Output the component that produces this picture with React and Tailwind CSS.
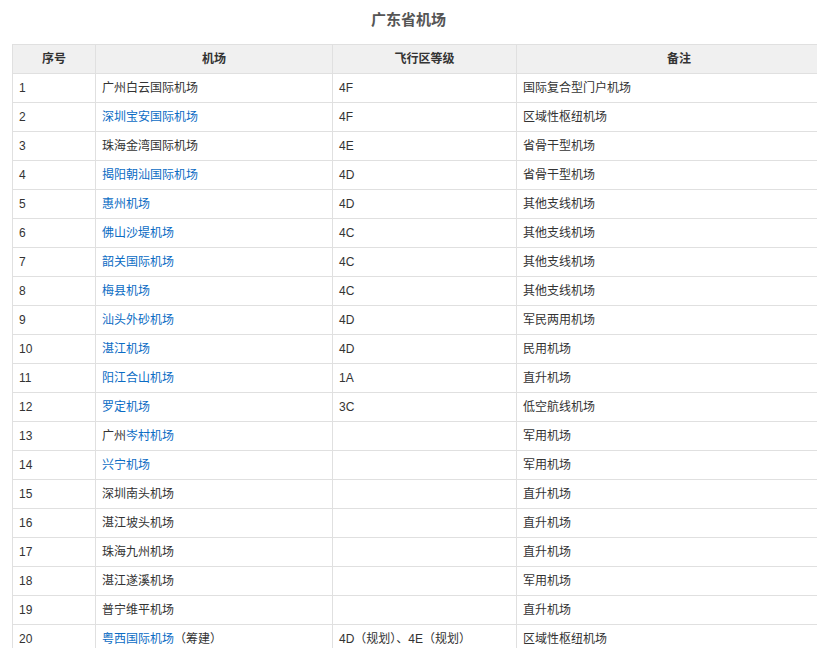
const rows=[
["1","广州白云国际机场",0,"4F","国际复合型门户机场"],
["2","深圳宝安国际机场",1,"4F","区域性枢纽机场"],
["3","珠海金湾国际机场",0,"4E","省骨干型机场"],
["4","揭阳朝汕国际机场",1,"4D","省骨干型机场"],
["5","惠州机场",1,"4D","其他支线机场"],
["6","佛山沙堤机场",1,"4C","其他支线机场"],
["7","韶关国际机场",1,"4C","其他支线机场"],
["8","梅县机场",1,"4C","其他支线机场"],
["9","汕头外砂机场",1,"4D","军民两用机场"],
["10","湛江机场",1,"4D","民用机场"],
["11","阳江合山机场",1,"1A","直升机场"],
["12","罗定机场",1,"3C","低空航线机场"],
["13","广州岑村机场",2,"","军用机场"],
["14","兴宁机场",1,"","军用机场"],
["15","深圳南头机场",0,"","直升机场"],
["16","湛江坡头机场",0,"","直升机场"],
["17","珠海九州机场",0,"","直升机场"],
["18","湛江遂溪机场",0,"","军用机场"],
["19","普宁维平机场",0,"","直升机场"],
["20","粤西国际机场（筹建）",3,"4D（规划）、4E（规划）","区域性枢纽机场"],
];
function Name({n,t}){
  if(t===1)return <span className="text-[#0b6cc4]">{n}</span>;
  if(t===2)return <span>广州<span className="text-[#0b6cc4]">岑村机场</span></span>;
  if(t===3)return <span><span className="text-[#0b6cc4]">粤西国际机场</span>（筹建）</span>;
  return <span>{n}</span>;
}
export default function App(){
  const td="border border-[#e0e0e0] px-[6px] h-[29px] align-middle";
  return <div className="w-[817px] h-[648px] overflow-hidden bg-white text-[12px] text-[#333]" style={{fontFamily:'"Liberation Sans","Noto Sans CJK SC",sans-serif'}}>
    <div className="h-[44px] flex items-center justify-center font-bold text-[15px] text-[#555] pb-[4px]">广东省机场</div>
    <table className="ml-[12px] border-collapse w-[830px] table-fixed">
      <colgroup><col className="w-[83px]"/><col className="w-[237px]"/><col className="w-[184px]"/><col/></colgroup>
      <thead><tr className="bg-[#f0f0f0] font-bold">
        {["序号","机场","飞行区等级","备注"].map(h=><th key={h} className={td+" text-center"}>{h}</th>)}
      </tr></thead>
      <tbody>{rows.map(r=><tr key={r[0]}>
        <td className={td}>{r[0]}</td>
        <td className={td}><Name n={r[1]} t={r[2]}/></td>
        <td className={td}>{r[3]}</td>
        <td className={td}>{r[4]}</td>
      </tr>)}</tbody>
    </table>
  </div>;
}
